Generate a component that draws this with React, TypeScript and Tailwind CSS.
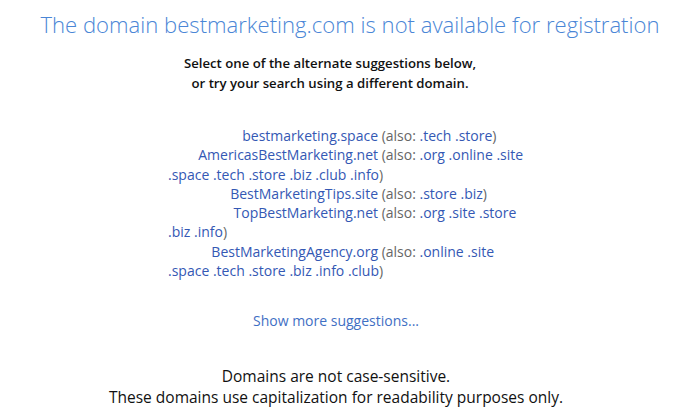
import React from "react";

const items: { d: string; also: string[] }[] = [
  { d: "bestmarketing.space", also: [".tech", ".store"] },
  { d: "AmericasBestMarketing.net", also: [".org", ".online", ".site", ".space", ".tech", ".store", ".biz", ".club", ".info"] },
  { d: "BestMarketingTips.site", also: [".store", ".biz"] },
  { d: "TopBestMarketing.net", also: [".org", ".site", ".store", ".biz", ".info"] },
  { d: "BestMarketingAgency.org", also: [".online", ".site", ".space", ".tech", ".store", ".biz", ".info", ".club"] },
];

export default function App() {
  return (
    <div className="w-[700px] h-[420px] bg-white overflow-hidden" style={{ fontFamily: '"Open Sans", sans-serif' }}>
      <h1 className="text-center font-light text-[22.1px] leading-[30px] text-[#4a86d6] pt-[9px]">
        The domain bestmarketing.com is not available for registration
      </h1>
      <p className="mt-[14px] pr-[40px] text-center font-semibold text-[13.2px] leading-[20px] text-[#111]">
        Select one of the alternate suggestions below,
        <br />
        or try your search using a different domain.
      </p>
      <div className="mt-[33px] mx-auto w-[364px] text-[14px] leading-[19.3px] text-[#666]">
        {items.map((it) => (
          <div key={it.d}>
            <span className="inline-block w-[210px] text-right text-[#3458b4]">{it.d}</span>{" "}
            (also:{" "}
            {it.also.map((a, i) => (
              <React.Fragment key={a}>
                <span className="text-[#3458b4]">{a}</span>
                {i < it.also.length - 1 ? " " : ""}
              </React.Fragment>
            ))}
            )
          </div>
        ))}
      </div>
      <p className="mt-[31px] pr-[28px] text-center text-[14px] leading-[20px] text-[#3f6fc4]">Show more suggestions...</p>
      <p className="mt-[35px] pr-[28px] text-center text-[15.5px] leading-[21px] text-[#111]">
        Domains are not case-sensitive.
        <br />
        These domains use capitalization for readability purposes only.
      </p>
    </div>
  );
}
